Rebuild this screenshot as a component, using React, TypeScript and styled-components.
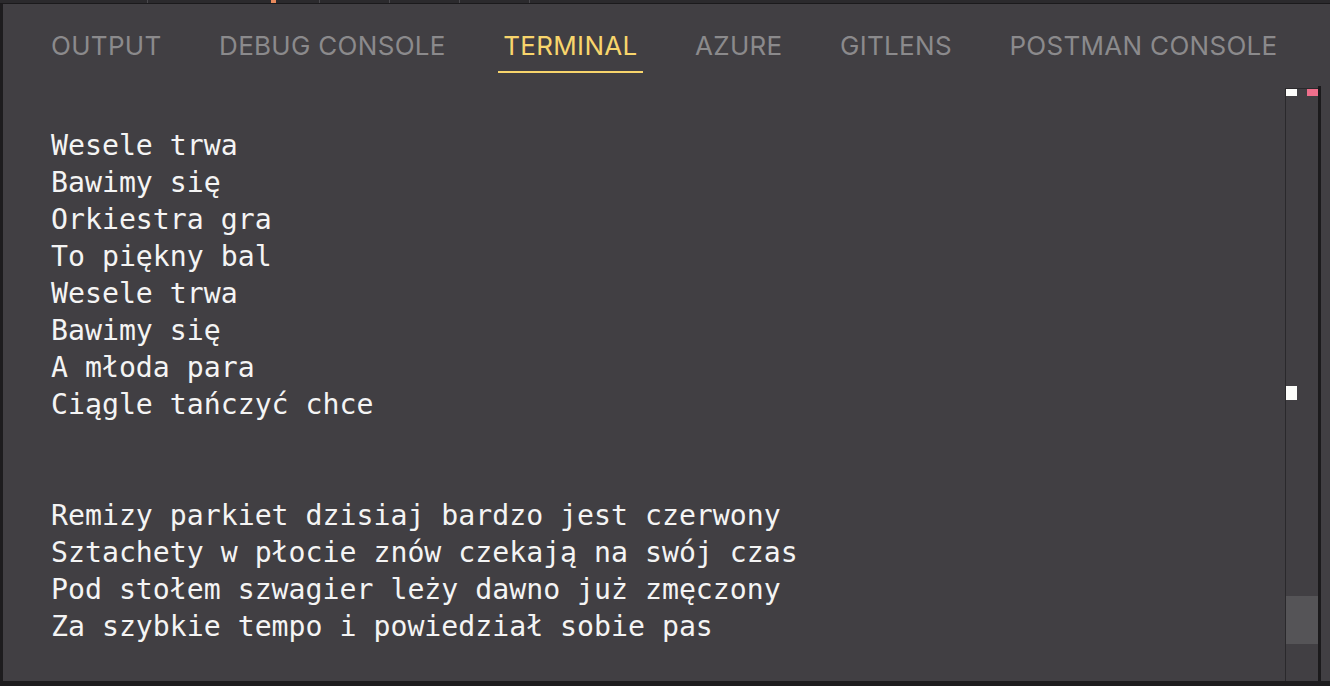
import styled, { createGlobalStyle } from "styled-components";

const GlobalStyle = createGlobalStyle`
	html, body {
		margin: 0;
		padding: 0;
		background: #1d1c1e;
		overflow: hidden;
	}
`;

const TABS = ["OUTPUT", "DEBUG CONSOLE", "TERMINAL", "AZURE", "GITLENS", "POSTMAN CONSOLE"];
const ACTIVE_TAB = "TERMINAL";

const EDITOR_TABS = [148, 172, 70, 70, 70];

const LINES = [
	"",
	"Wesele trwa",
	"Bawimy się",
	"Orkiestra gra",
	"To piękny bal",
	"Wesele trwa",
	"Bawimy się",
	"A młoda para",
	"Ciągle tańczyć chce",
	"",
	"",
	"Remizy parkiet dzisiaj bardzo jest czerwony",
	"Sztachety w płocie znów czekają na swój czas",
	"Pod stołem szwagier leży dawno już zmęczony",
	"Za szybkie tempo i powiedział sobie pas",
];

export default function App() {
	return (
		<>
			<GlobalStyle />
			<Window>
				<EditorTabStrip>
					{EDITOR_TABS.map((w, i) => (
						<EditorTabStub key={i} style={{ width: w }}>
							{i === 1 && <ModifiedMark />}
						</EditorTabStub>
					))}
				</EditorTabStrip>
				<Panel>
					<TabBar>
						{TABS.map((tab) => (
							<Tab key={tab} $active={tab === ACTIVE_TAB}>
								{tab}
							</Tab>
						))}
					</TabBar>
					<Body>
						<Terminal>
							{LINES.map((line, i) => (
								<Line key={i}>{line}</Line>
							))}
						</Terminal>
						<ScrollColumn>
							<Track>
								<Marker $color="#fdfdfb" $top={0} $left={0} $height={7} />
								<Marker $color="#ee6f8c" $top={0} $left={21} $height={7} />
								<Marker $color="#fdfdfb" $top={297} $left={0} $height={14} />
								<Thumb />
							</Track>
							<Divider />
						</ScrollColumn>
					</Body>
				</Panel>
			</Window>
		</>
	);
}

const Window = styled.div`
	width: 1330px;
	height: 686px;
	display: flex;
	flex-direction: column;
	background: #1d1c1e;
	box-sizing: border-box;
	padding-bottom: 5px;
`;

const EditorTabStrip = styled.div`
	height: 3px;
	flex: none;
	display: flex;
	background: #2b2a2d;
	border-bottom: 1px solid #1b1a1c;
`;

const EditorTabStub = styled.div`
	position: relative;
	height: 3px;
	box-sizing: border-box;
	border-right: 1px solid #4a494d;
	flex: none;
`;

const ModifiedMark = styled.span`
	position: absolute;
	left: 123px;
	top: 0;
	width: 5px;
	height: 3px;
	background: #e98a5d;
`;

const Panel = styled.div`
	flex: 1;
	margin-left: 3px;
	display: flex;
	flex-direction: column;
	background: #413f43;
	min-height: 0;
`;

const TabBar = styled.div`
	height: 83px;
	flex: none;
	box-sizing: border-box;
	padding: 27px 0 0 43px;
	display: flex;
	align-items: flex-start;
	gap: 47.5px;
`;

const Tab = styled.div<{ $active?: boolean }>`
	padding: 0 5px 10px;
	font-family: Inter, "Liberation Sans", sans-serif;
	font-size: 26px;
	line-height: 30px;
	font-weight: 400;
	letter-spacing: 0.3px;
	white-space: nowrap;
	color: ${(p) => (p.$active ? "#f8d56c" : "#8b8a8c")};
	border-bottom: 2px solid ${(p) => (p.$active ? "#f8d56c" : "transparent")};
`;

const Body = styled.div`
	flex: 1;
	display: flex;
	min-height: 0;
`;

const Terminal = styled.div`
	flex: 1;
	padding: 3px 0 0 48px;
	font-family: "DejaVu Sans Mono", "Liberation Mono", monospace;
	font-size: 28.2px;
	line-height: 37px;
	color: #f4f4f4;
	overflow: hidden;
`;

const Line = styled.div`
	height: 37px;
	white-space: pre;
`;

const ScrollColumn = styled.div`
	width: 45px;
	flex: none;
	display: flex;
	align-items: stretch;
	padding-top: 1px;
`;

const Track = styled.div`
	position: relative;
	width: 32px;
	border-left: 1px solid #2a292c;
	border-top: 1px solid #2a292c;
`;

const Marker = styled.div<{ $color: string; $top: number; $left: number; $height: number }>`
	position: absolute;
	top: ${(p) => p.$top}px;
	left: ${(p) => p.$left}px;
	width: 11px;
	height: ${(p) => p.$height}px;
	background: ${(p) => p.$color};
`;

const Thumb = styled.div`
	position: absolute;
	left: 0;
	right: 0;
	top: 507px;
	height: 48px;
	background: #555457;
`;

const Divider = styled.div`
	width: 3px;
	margin-top: -2px;
	background: #1b1a1c;
`;
